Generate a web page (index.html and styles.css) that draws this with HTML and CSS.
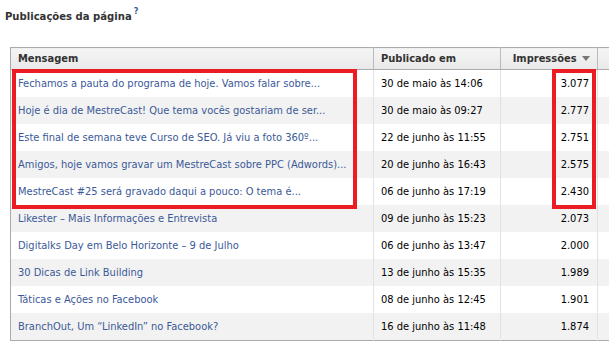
FILE: index.html
```html
<!DOCTYPE html>
<html lang="pt">
<head>
<meta charset="utf-8">
<title>Publicações da página</title>
<link rel="stylesheet" href="styles.css">
</head>
<body>
<div class="page">
  <h2 class="title">Publicações da página<sup class="help">?</sup></h2>
  <div class="table-wrap">
    <table class="posts">
      <thead>
        <tr>
          <th class="c-msg">Mensagem</th>
          <th class="c-date">Publicado em</th>
          <th class="c-imp">Impressões <span class="arrow"></span></th>
          <th class="c-extra"></th>
        </tr>
      </thead>
      <tbody>
        <tr><td class="c-msg"><a>Fechamos a pauta do programa de hoje. Vamos falar sobre...</a></td><td class="c-date">30 de maio às 14:06</td><td class="c-imp">3.077</td><td class="c-extra"></td></tr>
        <tr><td class="c-msg"><a>Hoje é dia de MestreCast! Que tema vocês gostariam de ser...</a></td><td class="c-date">30 de maio às 09:27</td><td class="c-imp">2.777</td><td class="c-extra"></td></tr>
        <tr><td class="c-msg"><a>Este final de semana teve Curso de SEO. Já viu a foto 360º...</a></td><td class="c-date">22 de junho às 11:55</td><td class="c-imp">2.751</td><td class="c-extra"></td></tr>
        <tr><td class="c-msg"><a>Amigos, hoje vamos gravar um MestreCast sobre PPC (Adwords)...</a></td><td class="c-date">20 de junho às 16:43</td><td class="c-imp">2.575</td><td class="c-extra"></td></tr>
        <tr><td class="c-msg"><a>MestreCast #25 será gravado daqui a pouco: O tema é...</a></td><td class="c-date">06 de junho às 17:19</td><td class="c-imp">2.430</td><td class="c-extra"></td></tr>
        <tr><td class="c-msg"><a>Likester – Mais Informações e Entrevista</a></td><td class="c-date">09 de junho às 15:23</td><td class="c-imp">2.073</td><td class="c-extra"></td></tr>
        <tr><td class="c-msg"><a>Digitalks Day em Belo Horizonte – 9 de Julho</a></td><td class="c-date">06 de junho às 13:47</td><td class="c-imp">2.000</td><td class="c-extra"></td></tr>
        <tr><td class="c-msg"><a>30 Dicas de Link Building</a></td><td class="c-date">13 de junho às 15:35</td><td class="c-imp">1.989</td><td class="c-extra"></td></tr>
        <tr><td class="c-msg"><a>Táticas e Ações no Facebook</a></td><td class="c-date">08 de junho às 12:45</td><td class="c-imp">1.901</td><td class="c-extra"></td></tr>
        <tr><td class="c-msg"><a>BranchOut, Um “LinkedIn” no Facebook?</a></td><td class="c-date">16 de junho às 11:48</td><td class="c-imp">1.874</td><td class="c-extra"></td></tr>
      </tbody>
    </table>
    <div class="mark mark-msg"></div>
    <div class="mark mark-imp"></div>
  </div>
</div>
</body>
</html>
```
FILE: styles.css
```css
html, body {
  margin: 0;
  padding: 0;
  background: #fff;
  overflow: hidden;
}
.page {
  font-family: "DejaVu Sans Condensed", "DejaVu Sans", sans-serif;
  font-size: 11px;
  color: #000;
  padding: 0 0 0 5px;
  width: 700px;
}
.title {
  margin: 0;
  padding-top: 10px;
  height: 47px;
  box-sizing: border-box;
  font-size: 11.2px;
  font-weight: bold;
  color: #333;
  line-height: 14px;
}
.help {
  color: #3b5998;
  font-size: 9px;
  vertical-align: 6px;
  line-height: 0;
  margin-left: 2px;
}
.table-wrap {
  position: relative;
  margin-left: 5px;
}
.posts {
  border-collapse: collapse;
  table-layout: fixed;
  width: 680px;
  border: 1px solid #aaa;
}
.posts th {
  height: 21px;
  padding: 0 7px;
  text-align: left;
  font-weight: bold;
  color: #333;
  background: linear-gradient(#f5f5f5, #e9e9e9);
  border-right: 1px solid #bbb;
  border-bottom: 1px solid #aaa;
}
.posts td {
  height: 27px;
  padding: 0 7px;
  border-right: 1px solid #e2e2e2;
  white-space: nowrap;
  overflow: hidden;
}
.posts tbody tr:nth-child(even) td {
  background: #f2f2f2;
}
.posts a {
  color: #3b5998;
}
.c-msg { width: 348px; }
.c-date { width: 112px; }
.c-imp { width: 82px; text-align: right; }
.posts th.c-imp { text-align: right; }
.posts td.c-imp { padding-right: 8px; }
.arrow {
  display: inline-block;
  width: 0;
  height: 0;
  border-left: 4px solid transparent;
  border-right: 4px solid transparent;
  border-top: 5px solid #777;
  vertical-align: 1px;
  margin-left: 2px;
}
.mark {
  position: absolute;
  border: 4px solid #ec1c24;
  box-sizing: border-box;
  pointer-events: none;
}
.mark-msg {
  left: 2px;
  top: 22px;
  width: 345px;
  height: 140px;
}
.mark-imp {
  left: 542px;
  top: 22px;
  width: 44px;
  height: 140px;
}
```
